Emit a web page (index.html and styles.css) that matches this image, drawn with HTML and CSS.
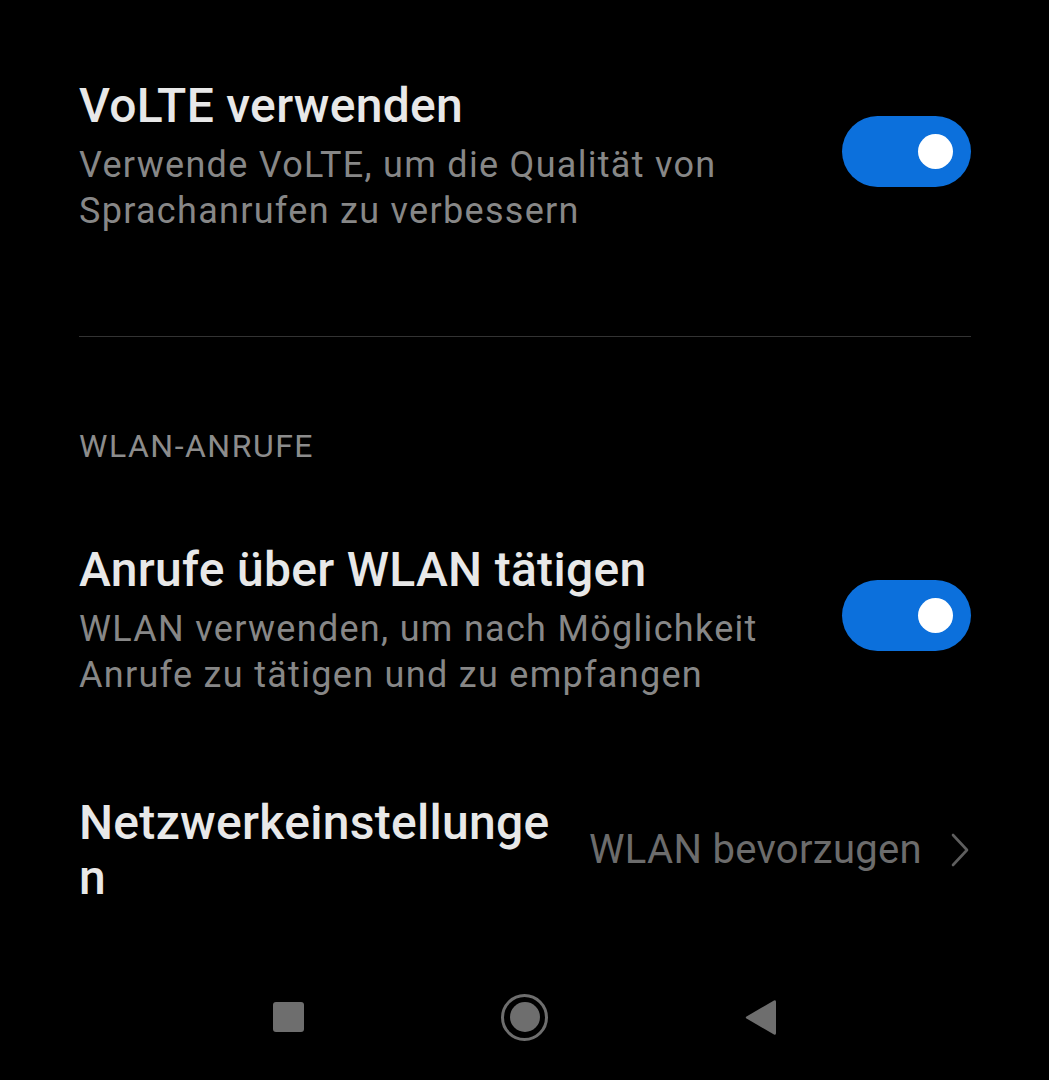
FILE: index.html
```html
<!DOCTYPE html>
<html lang="de">
<head>
<meta charset="utf-8">
<title>Anrufeinstellungen</title>
<link rel="stylesheet" href="styles.css">
</head>
<body>
<div class="screen">
  <main class="content">
    <div class="row row-first">
      <div class="text">
        <div class="title">VoLTE verwenden</div>
        <div class="summary">Verwende VoLTE, um die Qualität von<br>Sprachanrufen zu verbessern</div>
      </div>
      <div class="switch"><span class="knob"></span></div>
    </div>

    <div class="divider"></div>

    <div class="section-header">WLAN-ANRUFE</div>

    <div class="row row-wifi">
      <div class="text">
        <div class="title">Anrufe über WLAN tätigen</div>
        <div class="summary">WLAN verwenden, um nach Möglichkeit<br>Anrufe zu tätigen und zu empfangen</div>
      </div>
      <div class="switch"><span class="knob"></span></div>
    </div>

    <div class="row row-pref">
      <div class="title title-wrap">Netzwerkeinstellunge<br>n</div>
      <div class="value">
        <span class="value-text">WLAN bevorzugen</span>
        <svg class="chevron" width="18" height="34" viewBox="0 0 18 34"><polyline points="2,2 16,17 2,32" fill="none" stroke="#5e5e5e" stroke-width="2.6" stroke-linecap="round" stroke-linejoin="round"/></svg>
      </div>
    </div>
  </main>

  <nav class="navbar">
    <span class="nav-square"></span>
    <span class="nav-home"><span class="nav-home-inner"></span></span>
    <svg class="nav-back" width="31" height="37" viewBox="0 0 31 37"><path d="M29 1.5 Q31 0.5 31 3 L31 34 Q31 36.5 29 35.5 L1.5 19.5 Q0 18.5 1.5 17.5 Z" fill="#6e6e6e"/></svg>
  </nav>
</div>
</body>
</html>
```

FILE: styles.css
```css
html, body {
  margin: 0;
  padding: 0;
  background: #000;
}

body {
  font-family: Roboto, "Noto Sans", "Liberation Sans", sans-serif;
  color: #e8e8e8;
}

.screen {
  height: 1080px;
  display: flex;
  flex-direction: column;
  overflow: hidden;
}

.content {
  flex: 1;
  padding: 78px 78px 0 79px;
  display: flex;
  flex-direction: column;
}

.row {
  display: flex;
  justify-content: space-between;
  align-items: flex-start;
}

.text {
  display: flex;
  flex-direction: column;
  gap: 8px;
}

.title {
  font-size: 48px;
  font-weight: 500;
  line-height: 56px;
  letter-spacing: 0.3px;
  color: #e8e8e8;
}

.summary {
  font-size: 36px;
  line-height: 46px;
  letter-spacing: 1.3px;
  color: #878787;
}

.switch {
  width: 129px;
  height: 71px;
  border-radius: 36px;
  background: #0c70dc;
  display: flex;
  align-items: center;
  justify-content: flex-end;
  padding-right: 18px;
  box-sizing: border-box;
  margin-top: 38px;
  flex-shrink: 0;
}

.knob {
  width: 35px;
  height: 35px;
  border-radius: 50%;
  background: #fff;
}

.divider {
  height: 1px;
  background: #333;
  margin-top: 102px;
}

.section-header {
  margin-top: 89px;
  font-size: 32px;
  line-height: 40px;
  letter-spacing: 1.5px;
  color: #8c8c8c;
}

.row-wifi {
  margin-top: 76px;
}

.row-pref {
  margin-top: 97px;
  align-items: center;
}

.title-wrap {
  line-height: 55px;
}

.value {
  display: flex;
  align-items: center;
  gap: 29px;
}

.value-text {
  font-size: 40px;
  line-height: 48px;
  letter-spacing: 0.3px;
  color: #6c6c6c;
}

.chevron {
  display: block;
  margin-right: 2px;
}

.navbar {
  height: 126px;
  display: flex;
  align-items: center;
  justify-content: center;
  gap: 197px;
}

.nav-square {
  width: 31px;
  height: 30px;
  border-radius: 3px;
  background: #6e6e6e;
}

.nav-home {
  width: 47px;
  height: 47px;
  border-radius: 50%;
  border: 3.5px solid #6e6e6e;
  box-sizing: border-box;
  display: flex;
  align-items: center;
  justify-content: center;
}

.nav-home-inner {
  width: 30px;
  height: 30px;
  border-radius: 50%;
  background: #6e6e6e;
}

.nav-back {
  display: block;
}
```
